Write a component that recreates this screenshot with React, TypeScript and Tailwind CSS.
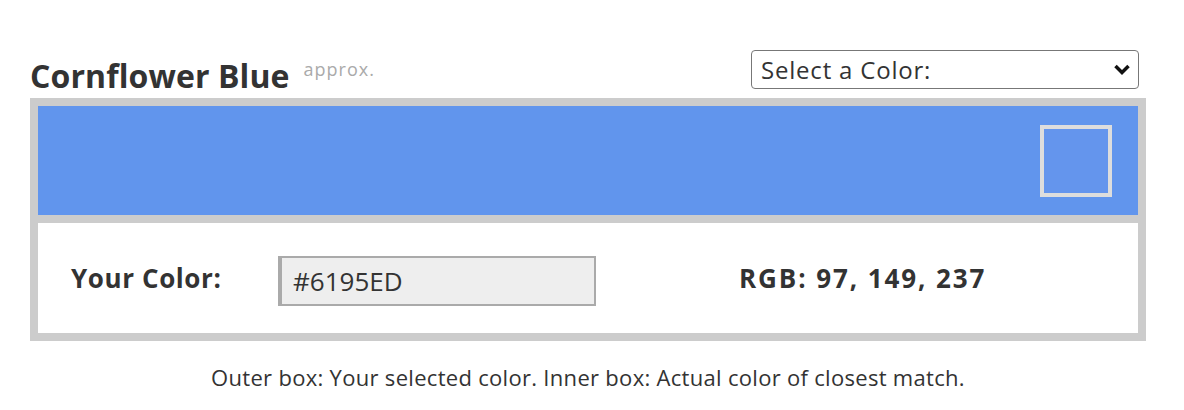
const App = () => {
  return (
    <div className="w-[1184px] h-[410px] bg-white pl-[30px] pr-[38px] pt-[50px] text-[#333] font-['Open_Sans',sans-serif]">
      <div className="flex items-end justify-between h-[48px]">
        <div className="flex items-start pb-[3px]">
          <h1 className="text-[32px] leading-[38px] font-bold tracking-[0.1px]">Cornflower Blue</h1>
          <span className="ml-[14px] mt-[1px] text-[18px] leading-[22px] tracking-[1px] text-[#aaa]">approx.</span>
        </div>
        <div className="relative mb-[9px] mr-[7px]">
          <select className="w-[388px] h-[39px] appearance-none rounded-[4px] border border-[#777] bg-white pl-[9px] text-[24px] tracking-[0.8px] text-[#333] outline-none">
            <option>Select a Color:</option>
          </select>
          <svg
            className="pointer-events-none absolute right-[8px] top-[13px]"
            width="18"
            height="13"
            viewBox="0 0 18 13"
          >
            <path d="M2.5 3 L9 9.5 L15.5 3" fill="none" stroke="#111" strokeWidth="3.5" />
          </svg>
        </div>
      </div>

      <div className="border-8 border-[#ccc] bg-[#ccc] flex flex-col gap-[8px]">
        <div className="h-[109px] bg-[#6195ed] flex items-center justify-end pr-[26px]">
          <div className="w-[72px] h-[72px] border-4 border-[#ddd] bg-[#6495ed]" />
        </div>
        <div className="h-[110px] bg-white flex items-center pl-[33px]">
          <div className="w-[207px] text-[26px] font-bold tracking-[0.6px]">Your Color:</div>
          <div className="w-[318px] h-[50px] mt-[6px] bg-[#eee] border-2 border-l-4 border-[#aaa] flex items-center pl-[11px] text-[26px]">
            #6195ED
          </div>
          <div className="ml-[143px] text-[26px] font-bold tracking-[1.9px]">RGB: 97, 149, 237</div>
        </div>
      </div>

      <p className="mt-[20px] text-center text-[22px] tracking-[0.3px] text-[#333]">
        Outer box: Your selected color. Inner box: Actual color of closest match.
      </p>
    </div>
  );
};

export default App;
